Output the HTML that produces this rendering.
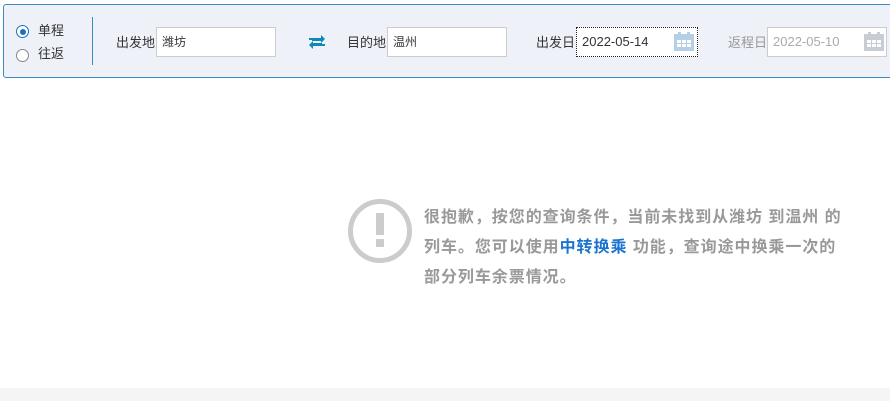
<!DOCTYPE html>
<html><head><meta charset="utf-8"><style>
*{margin:0;padding:0;box-sizing:border-box}
body{width:890px;height:401px;background:#fff;position:relative;overflow:hidden;font-family:"Liberation Sans","Noto Sans CJK SC",sans-serif;font-size:12px;color:#333}
.bar{position:absolute;left:3px;top:4px;width:892px;height:74px;background:#eef1f8;border:1px solid #3a8ac4;border-radius:3px}
.abs{position:absolute}
.lbl{position:absolute;top:36px;font-size:13px;line-height:14px}
.inp{position:absolute;top:27px;height:30px;background:#fff;border:1px solid #ccc;font-size:12px;line-height:28px;padding-left:5px}
.cal{position:absolute;top:32px;width:20px;height:19px}
</style></head><body>
<div class="bar"></div>
<div class="abs" style="left:16px;top:25px;width:13px;height:13px;border:1px solid #1a6fc4;border-radius:50%;background:#fff"></div>
<div class="abs" style="left:19.5px;top:28.5px;width:6px;height:6px;border-radius:50%;background:#1a6fc4"></div>
<div class="lbl" style="left:38px;top:24px">单程</div>
<div class="abs" style="left:16px;top:49px;width:13px;height:13px;border:1px solid #888;border-radius:50%;background:#fff"></div>
<div class="lbl" style="left:38px;top:47px">往返</div>
<div class="abs" style="left:92px;top:17px;width:1px;height:48px;background:#3a8ac4"></div>
<div class="lbl" style="left:116px">出发地</div>
<div class="inp" style="left:156px;width:120px">潍坊</div>
<svg class="abs" style="left:308px;top:35px" width="18" height="14" viewBox="0 0 18 14">
<path d="M1 5 L1 3 L13 3 L13 0 L17 4 L13 8 L13 6 L4 6 L4 5Z" fill="#0f8ab8"/>
<path d="M17 9 L17 11 L5 11 L5 14 L1 10 L5 6 L5 8 L14 8 L14 9Z" fill="#0f8ab8"/>
</svg>
<div class="lbl" style="left:347px">目的地</div>
<div class="inp" style="left:387px;width:120px">温州</div>
<div class="lbl" style="left:536px">出发日</div>
<div class="inp" style="left:576px;width:122px;border:1px dotted #222;font-size:13px">2022-05-14</div>
<svg class="cal" style="left:674px" viewBox="0 0 20 19"><rect x="0" y="2" width="20" height="17" fill="#b4cfe6"/><rect x="4" y="0" width="3" height="4" fill="#b4cfe6"/><rect x="13" y="0" width="3" height="4" fill="#b4cfe6"/><g fill="#fff"><rect x="3" y="8" width="4" height="3"/><rect x="8" y="8" width="4" height="3"/><rect x="13" y="8" width="4" height="3"/><rect x="3" y="12" width="4" height="3"/><rect x="8" y="12" width="4" height="3"/><rect x="13" y="12" width="4" height="3"/></g></svg>
<div class="lbl" style="left:728px;color:#999">返程日</div>
<div class="inp" style="left:767px;width:120px;color:#aaa;font-size:13px">2022-05-10</div>
<svg class="cal" style="left:864px" viewBox="0 0 20 19"><rect x="0" y="2" width="20" height="17" fill="#c8ccd4"/><rect x="4" y="0" width="3" height="4" fill="#c8ccd4"/><rect x="13" y="0" width="3" height="4" fill="#c8ccd4"/><g fill="#fff"><rect x="3" y="8" width="4" height="3"/><rect x="8" y="8" width="4" height="3"/><rect x="13" y="8" width="4" height="3"/><rect x="3" y="12" width="4" height="3"/><rect x="8" y="12" width="4" height="3"/><rect x="13" y="12" width="4" height="3"/></g></svg>
<svg class="abs" style="left:347px;top:198px" width="66" height="66" viewBox="0 0 66 66">
<circle cx="33" cy="33" r="29.5" fill="none" stroke="#cccccc" stroke-width="5"/>
<rect x="29" y="15" width="8" height="22" fill="#cccccc"/>
<rect x="29" y="41" width="8" height="8" fill="#cccccc"/>
</svg>
<div class="abs" style="left:424px;top:203px;width:440px;font-size:16px;font-weight:bold;line-height:30px;color:#999;letter-spacing:0.95px">很抱歉，按您的查询条件，当前未找到从潍坊 到温州 的<br>列车。您可以使用<span style="color:#1b75d0">中转换乘</span> 功能，查询途中换乘一次的<br>部分列车余票情况。</div>
<div class="abs" style="left:0;top:388px;width:890px;height:13px;background:#f5f5f5"></div>
</body></html>
